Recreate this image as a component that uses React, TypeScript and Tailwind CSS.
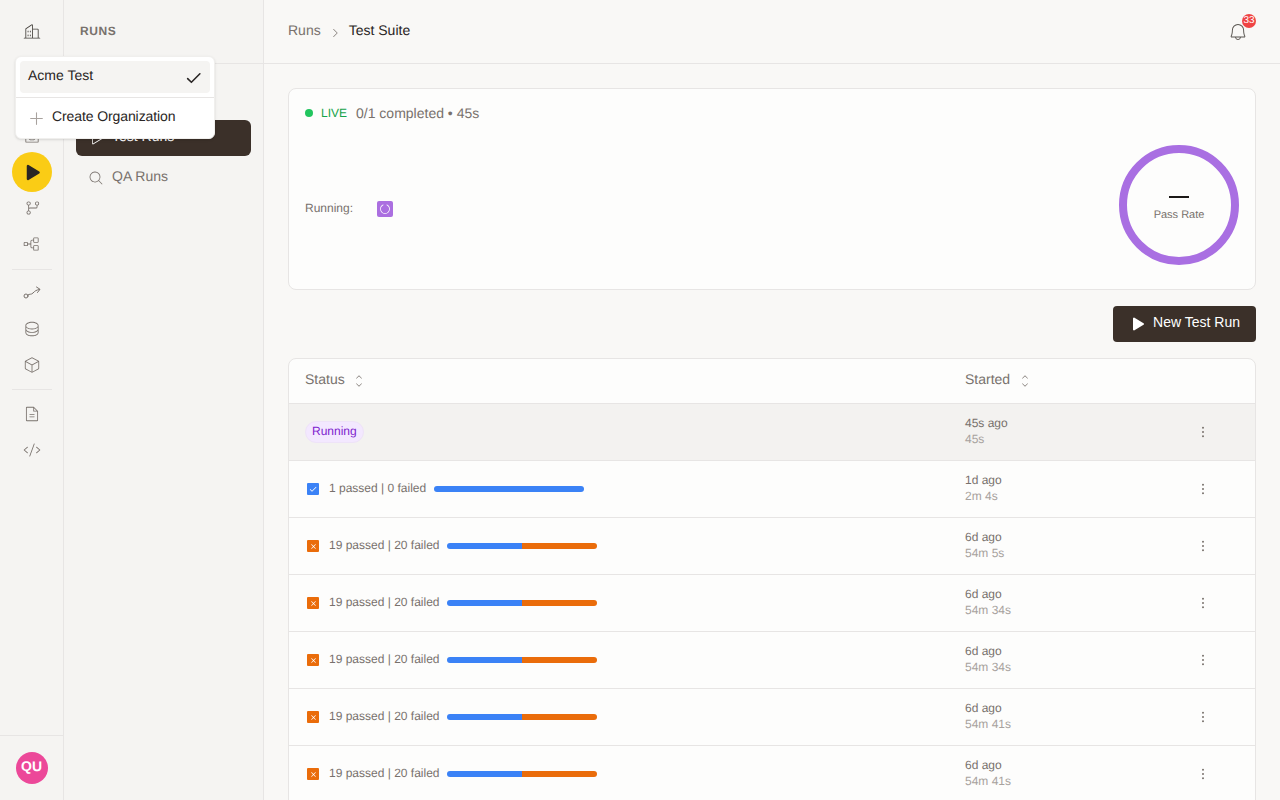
import {
  PiBellLight,
  PiBuildingsLight,
  PiCaretRightLight,
  PiCaretUpDownLight,
  PiCheckBold,
  PiCircleNotch,
  PiCodeLight,
  PiCubeLight,
  PiDatabaseLight,
  PiDotsThreeVerticalBold,
  PiFileTextLight,
  PiGitBranchLight,
  PiMagnifyingGlassLight,
  PiPlayFill,
  PiPlayLight,
  PiPlus,
  PiTrayLight,
  PiTreeStructureLight,
  PiXBold,
} from 'react-icons/pi'

const runs = [
  { label: '1 passed | 0 failed', ok: true, started: '1d ago', took: '2m 4s' },
  { label: '19 passed | 20 failed', ok: false, started: '6d ago', took: '54m 5s' },
  { label: '19 passed | 20 failed', ok: false, started: '6d ago', took: '54m 34s' },
  { label: '19 passed | 20 failed', ok: false, started: '6d ago', took: '54m 34s' },
  { label: '19 passed | 20 failed', ok: false, started: '6d ago', took: '54m 41s' },
  { label: '19 passed | 20 failed', ok: false, started: '6d ago', took: '54m 41s' },
]

function RailIcon({ children }: { children: React.ReactNode }) {
  return <div className="flex h-9 w-full items-center justify-center text-[#78716c]">{children}</div>
}

function TimeCell({ started, took }: { started: string; took: string }) {
  return (
    <div className="w-[222px] shrink-0 pb-0.5">
      <div className="text-xs leading-4 text-[#78716c]">{started}</div>
      <div className="text-xs leading-4 text-[#a8a29e]">{took}</div>
    </div>
  )
}

function RowMenu() {
  return (
    <div className="flex w-[32px] justify-center text-[#78716c]">
      <PiDotsThreeVerticalBold size={16} />
    </div>
  )
}

// the route glyph in the rail, circle bottom left and arrow top right
function RouteIcon() {
  return (
    <svg width="18" height="18" viewBox="0 0 18 18" fill="none" stroke="currentColor" strokeWidth="1" strokeLinecap="round" strokeLinejoin="round">
      <circle cx="3" cy="12" r="2" />
      <path d="M4.8 11C7 9.5 8 11 10 9S13 6 16.5 5.5" />
      <path d="M13.5 3L17 5.3L14.5 8.5" />
    </svg>
  )
}

export default function App() {
  return (
    <div className="relative flex h-[800px] overflow-hidden bg-[#f9f8f6] font-['Liberation_Sans',Arial,sans-serif] text-[#1c1917] [text-rendering:geometricPrecision]">
      {/* icon rail */}
      <aside className="flex w-[64px] shrink-0 flex-col border-r border-[#e7e5e4] bg-[#f5f4f2]">
        <div className="flex h-[64px] shrink-0 items-center justify-center text-[#44403c]">
          <PiBuildingsLight size={18} />
        </div>
        <div className="flex flex-1 flex-col items-center pt-[54px]">
          <RailIcon>
            <PiTrayLight size={18} />
          </RailIcon>
          <div className="my-[-2px] flex h-10 w-10 shrink-0 items-center justify-center rounded-full bg-[#facc15] text-[#292524]">
            <PiPlayFill size={19} />
          </div>
          <RailIcon>
            <PiGitBranchLight size={18} />
          </RailIcon>
          <RailIcon>
            <PiTreeStructureLight size={18} />
          </RailIcon>
          <div className="mb-[5px] mt-[7px] h-px w-10 shrink-0 bg-[#e7e5e4]" />
          <RailIcon>
            <RouteIcon />
          </RailIcon>
          <RailIcon>
            <PiDatabaseLight size={18} />
          </RailIcon>
          <RailIcon>
            <PiCubeLight size={18} />
          </RailIcon>
          <div className="my-1.5 h-px w-10 shrink-0 bg-[#e7e5e4]" />
          <RailIcon>
            <PiFileTextLight size={18} />
          </RailIcon>
          <RailIcon>
            <PiCodeLight size={18} />
          </RailIcon>
        </div>
        <div className="flex h-[65px] shrink-0 items-center justify-center border-t border-[#e7e5e4]">
          <div className="flex h-8 w-8 items-center justify-center rounded-full bg-[#ec4899] text-sm font-bold text-white">
            <span className="mb-1">QU</span>
          </div>
        </div>
      </aside>

      {/* runs sidebar */}
      <aside className="w-[200px] shrink-0 border-r border-[#e7e5e4] bg-[#f5f4f2]">
        <div className="flex h-[64px] items-center border-b border-[#e7e5e4] pl-4 text-xs font-bold tracking-[0.6px] text-[#78716c]">
          <span className="mb-0.5">RUNS</span>
        </div>
        <nav className="flex flex-col gap-1 px-3 pt-14">
          <div className="flex h-9 items-center gap-2 rounded-md bg-[#3b3029] pl-3 text-sm text-white">
            <PiPlayLight size={16} />
            <span className="mb-1">Test Runs</span>
          </div>
          <div className="flex h-9 items-center gap-2 pl-3 text-sm text-[#78716c]">
            <PiMagnifyingGlassLight size={16} />
            <span className="mb-1">QA Runs</span>
          </div>
        </nav>
      </aside>

      {/* main */}
      <main className="flex min-w-0 flex-1 flex-col">
        <header className="flex h-[64px] shrink-0 items-center justify-between border-b border-[#e7e5e4] pl-6 pr-[32px]">
          <div className="flex items-center gap-2 text-sm">
            <span className="mb-1 text-[#78716c]">Runs</span>
            <PiCaretRightLight size={12} className="mt-0.5 text-[#78716c]" />
            <span className="mb-1 text-[#292524]">Test Suite</span>
          </div>
          <div className="relative text-[#57534e]">
            <PiBellLight size={20} />
            <span className="absolute -right-[8px] -top-[8px] flex h-3.5 w-3.5 items-center justify-center rounded-full bg-[#ef4444] text-[10px] text-white">33</span>
          </div>
        </header>

        <div className="flex flex-col gap-4 px-6 pt-6">
          {/* live card */}
          <section className="h-[202px] rounded-lg border border-[#e7e5e4] bg-[#fdfdfc] px-4 pt-4">
            <div className="flex items-center gap-2 text-sm leading-4">
              <span className="h-2 w-2 rounded-full bg-[#22c55e]" />
              <span className="text-xs text-[#16a34a]">LIVE</span>
              <span className="ml-px text-[#78716c]">0/1 completed • 45s</span>
            </div>
            <div className="mt-6 flex items-center justify-between">
              <div className="mt-2 flex items-center">
                <span className="mb-0.5 w-[72px] text-xs text-[#78716c]">Running:</span>
                <span className="flex h-4 w-4 items-center justify-center rounded-[2px] bg-[#ab6fe0] text-white">
                  <PiCircleNotch size={12} />
                </span>
              </div>
              <div className="flex h-[120px] w-[120px] flex-col items-center justify-center rounded-full border-[8px] border-[#a96fe2] pt-[8px]">
                <div className="h-[2px] w-5 bg-[#1c1917]" />
                <div className="mt-[10px] text-[11px] leading-[14px] text-[#78716c]">Pass Rate</div>
              </div>
            </div>
          </section>

          <div className="flex justify-end">
            <button className="flex h-9 items-center gap-2 rounded-[4px] bg-[#3b3029] pl-4 pr-4 text-sm text-white">
              <PiPlayFill size={16} />
              <span className="mb-1">New Test Run</span>
            </button>
          </div>

          {/* runs table */}
          <section className="rounded-t-lg border border-[#e7e5e4] bg-[#fdfdfc]">
            <div className="flex h-[44px] items-center text-sm text-[#78716c]">
              <div className="flex flex-1 items-center gap-[7px] pl-4">
                <span className="mb-1">Status</span>
                <PiCaretUpDownLight size={14} />
              </div>
              <div className="flex w-[290px] items-center gap-2">
                <span className="mb-1">Started</span>
                <PiCaretUpDownLight size={14} />
              </div>
            </div>
            <div className="flex h-[57px] items-center border-t border-[#e7e5e4] bg-[#f3f2f0] pr-[36px]">
              <div className="flex flex-1 pl-4">
                <span className="rounded-full border border-[#eee3f8] bg-[#f3e8ff] px-1.5 pb-[3px] pt-px text-xs leading-4 text-[#7e22ce]">Running</span>
              </div>
              <TimeCell started="45s ago" took="45s" />
              <RowMenu />
            </div>
            {runs.map((run, i) => (
              <div key={i} className="flex h-[57px] items-center border-t border-[#e7e5e4] pr-[36px]">
                <div className="flex flex-1 items-center pl-[18px]">
                  <span className={run.ok ? 'flex h-3 w-3 items-center justify-center rounded-[1px] bg-[#3b82f6] text-white' : 'flex h-3 w-3 items-center justify-center rounded-[1px] bg-[#ea6c0a] text-white'}>
                    {run.ok ? <PiCheckBold size={8} /> : <PiXBold size={7} />}
                  </span>
                  <span className="mb-0.5 ml-[10px] text-xs text-[#78716c]">{run.label}</span>
                  <span className={run.ok ? 'ml-2 flex h-1.5 w-[150px] overflow-hidden rounded-full' : 'ml-[7px] flex h-1.5 w-[150px] overflow-hidden rounded-full'}>
                    {run.ok ? (
                      <span className="h-full w-full bg-[#3b82f6]" />
                    ) : (
                      <>
                        <span className="h-full w-1/2 bg-[#3b82f6]" />
                        <span className="h-full w-1/2 bg-[#ea6c0a]" />
                      </>
                    )}
                  </span>
                </div>
                <TimeCell started={run.started} took={run.took} />
                <RowMenu />
              </div>
            ))}
          </section>
        </div>
      </main>

      {/* organization menu */}
      <div className="absolute left-[15px] top-[56px] w-[200px] rounded-md border border-[#f0efed] bg-white shadow-sm">
        <div className="p-1">
          <div className="flex h-8 items-center justify-between rounded-sm bg-[#f5f4f2] pl-2 pr-2 text-sm text-[#292524]">
            <span className="mb-1">Acme Test</span>
            <PiCheckBold size={17} />
          </div>
        </div>
        <div className="h-px bg-[#e7e5e4]" />
        <div className="flex h-[40px] items-center gap-[7px] pl-3 text-sm text-[#292524]">
          <PiPlus size={17} className="text-[#a8a29e]" />
          <span className="mb-1 tracking-[-0.1px]">Create Organization</span>
        </div>
      </div>
    </div>
  )
}
